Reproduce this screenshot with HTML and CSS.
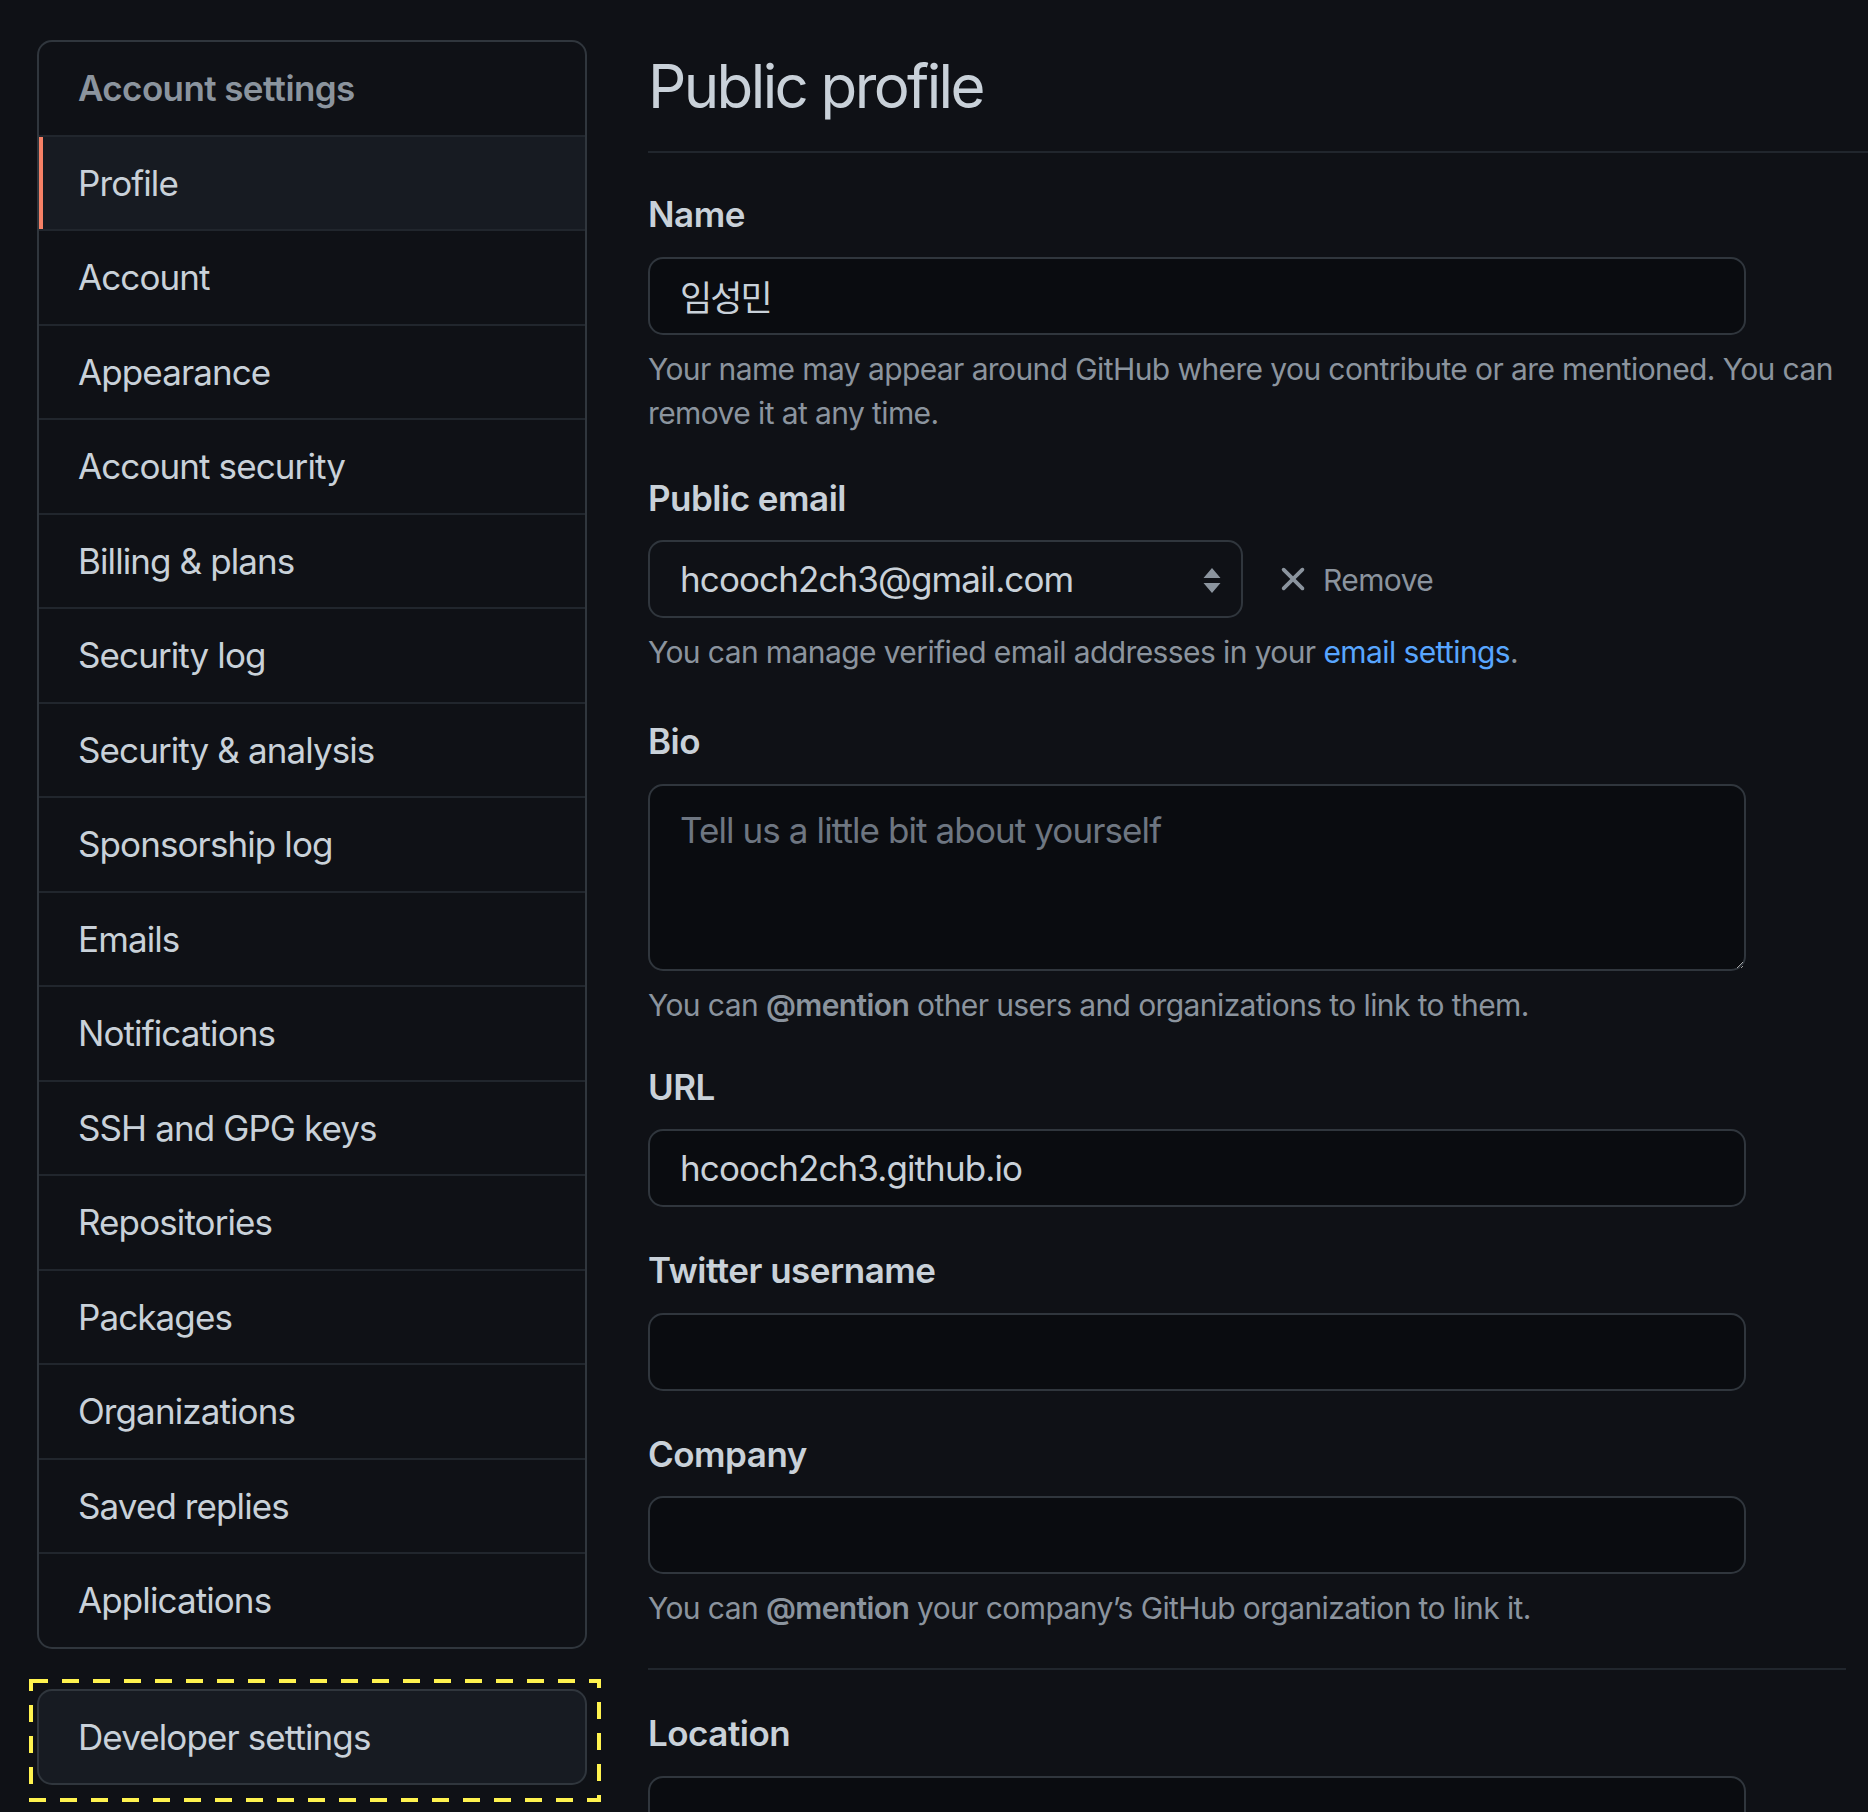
FILE: index.html
```html
<!DOCTYPE html>
<html lang="en">
<head>
<meta charset="utf-8">
<title>Public profile</title>
<link rel="stylesheet" href="styles.css">
</head>
<body>
<div class="layout">
  <aside class="sidebar">
    <nav class="menu">
      <h3 class="menu-heading">Account settings</h3>
      <a class="menu-item active">Profile</a>
      <a class="menu-item">Account</a>
      <a class="menu-item">Appearance</a>
      <a class="menu-item">Account security</a>
      <a class="menu-item">Billing &amp; plans</a>
      <a class="menu-item">Security log</a>
      <a class="menu-item">Security &amp; analysis</a>
      <a class="menu-item">Sponsorship log</a>
      <a class="menu-item">Emails</a>
      <a class="menu-item">Notifications</a>
      <a class="menu-item">SSH and GPG keys</a>
      <a class="menu-item">Repositories</a>
      <a class="menu-item">Packages</a>
      <a class="menu-item">Organizations</a>
      <a class="menu-item">Saved replies</a>
      <a class="menu-item">Applications</a>
    </nav>
    <div class="dev-wrap">
      <nav class="menu dev-menu">
        <a class="menu-item">Developer settings</a>
      </nav>
      <svg class="highlight" width="572" height="123" viewBox="0 0 572 123" aria-hidden="true">
        <rect x="2" y="2" width="568" height="119" fill="none" stroke="#fff34f" stroke-width="4" stroke-dasharray="17 14"/>
      </svg>
    </div>
  </aside>

  <main class="main">
    <div class="subhead">
      <h2 class="subhead-title">Public profile</h2>
    </div>
    <form class="form">
      <div class="form-group">
        <label class="label">Name</label>
        <input class="input input-ko" type="text" value="임성민">
        <p class="note">Your name may appear around GitHub where you contribute or are mentioned. You can remove it at any time.</p>
      </div>

      <div class="form-group">
        <label class="label">Public email</label>
        <div class="email-row">
          <div class="select-wrap">
            <select class="select">
              <option>hcooch2ch3@gmail.com</option>
            </select>
            <svg class="select-arrows" width="18" height="25" viewBox="0 0 18 25" aria-hidden="true">
              <path d="M9 0 L17.5 10 L0.5 10 Z M0.5 15 L17.5 15 L9 25 Z" fill="#8b949e"/>
            </svg>
          </div>
          <button class="btn-remove" type="button">
            <svg width="40" height="40" viewBox="0 0 16 16" aria-hidden="true"><path fill="#8b949e" d="M3.72 3.72a.75.75 0 0 1 1.06 0L8 6.94l3.22-3.22a.749.749 0 0 1 1.275.326.749.749 0 0 1-.215.734L9.06 8l3.22 3.22a.749.749 0 0 1-.326 1.275.749.749 0 0 1-.734-.215L8 9.06l-3.220 3.22a.751.751 0 0 1-1.042-.018.751.751 0 0 1-.018-1.042L6.94 8 3.72 4.78a.75.75 0 0 1 0-1.06Z"/></svg>
            <span>Remove</span>
          </button>
        </div>
        <p class="note">You can manage verified email addresses in your <a class="link">email settings</a>.</p>
      </div>

      <div class="form-group group-bio">
        <label class="label">Bio</label>
        <textarea class="input textarea" placeholder="Tell us a little bit about yourself"></textarea>
        <p class="note">You can <strong>@mention</strong> other users and organizations to link to them.</p>
      </div>

      <div class="form-group group-url">
        <label class="label">URL</label>
        <input class="input" type="text" value="hcooch2ch3.github.io">
      </div>

      <div class="form-group">
        <label class="label">Twitter username</label>
        <input class="input" type="text" value="">
      </div>

      <div class="form-group">
        <label class="label">Company</label>
        <input class="input" type="text" value="">
        <p class="note">You can <strong>@mention</strong> your company’s GitHub organization to link it.</p>
      </div>

      <hr class="divider">

      <div class="form-group group-location">
        <label class="label">Location</label>
        <input class="input" type="text" value="">
      </div>
    </form>
  </main>
</div>
</body>
</html>
```

FILE: styles.css
```css
html, body {
  margin: 0;
  padding: 0;
  background: #0f1116;
  color-scheme: dark;
}

body {
  font-family: Inter, "Noto Sans CJK KR", "Noto Sans", sans-serif;
  color: #c9d1d9;
  overflow: hidden;
  height: 1812px;
}

.layout {
  display: flex;
  gap: 61px;
  padding: 40px 0 0 37px;
}

/* Sidebar */
.sidebar {
  width: 550px;
  flex-shrink: 0;
}

.menu {
  display: flex;
  flex-direction: column;
  border: 2px solid #30363d;
  border-radius: 15px;
  overflow: hidden;
  background: #0f1116;
}

.menu-heading,
.menu-item {
  display: flex;
  align-items: center;
  height: 92.5px;
  padding-left: 39px;
  margin: 0;
  font-size: 35px;
  line-height: 52.5px;
  letter-spacing: -0.9px;
  border-top: 2px solid #21262d;
  box-sizing: content-box;
  color: #c9d1d9;
  text-decoration: none;
}

.menu-heading {
  border-top: 0;
  font-weight: 600;
  letter-spacing: -0.6px;
  color: #8b949e;
}

.menu-item.active {
  background: #171b22;
  box-shadow: inset 4px 0 0 #f78166;
}

.dev-wrap {
  position: relative;
  margin-top: 40px;
}

.dev-menu {
  background: #171b22;
}

.dev-menu .menu-item {
  border-top: 0;
}

.highlight {
  position: absolute;
  left: -8px;
  top: -10px;
  pointer-events: none;
}

/* Main */
.main {
  flex: 1;
  min-width: 0;
}

.subhead {
  padding-top: 1px;
  padding-bottom: 20px;
  border-bottom: 2px solid #21262d;
}

.subhead-title {
  margin: 0;
  font-size: 60px;
  line-height: 90px;
  font-weight: 400;
  letter-spacing: -2.6px;
  color: #c9d1d9;
}

.form {
  width: 1198px;
  padding-top: 1px;
}

.form-group {
  margin: 37px 0;
}

.form-group:first-child {
  margin-top: 34px;
}

.group-bio {
  margin-top: 41px;
  margin-bottom: 34px;
}

.group-url {
  margin-top: 34px;
}

.label {
  display: block;
  font-size: 35px;
  line-height: 52.5px;
  font-weight: 600;
  letter-spacing: -0.5px;
  color: #c9d1d9;
  margin-bottom: 16px;
}

.input {
  display: block;
  box-sizing: border-box;
  width: 1098px;
  height: 78px;
  padding: 0 30px;
  margin: 0;
  font-family: Inter, "Noto Sans CJK KR", sans-serif;
  font-size: 35px;
  letter-spacing: -0.9px;
  color: #c9d1d9;
  background: #0a0c10;
  border: 2px solid #30363d;
  border-radius: 15px;
  outline: none;
}

.input-ko {
  letter-spacing: -2px;
}

.textarea {
  height: 187px;
  padding-top: 18px;
  line-height: 52.5px;
  resize: vertical;
}

.textarea::placeholder {
  color: #6e7681;
}

.note {
  margin: 12px 0 0;
  font-size: 30px;
  line-height: 44px;
  letter-spacing: -0.6px;
  color: #8b949e;
}

.note strong {
  font-weight: 600;
}

.link {
  color: #58a6ff;
  text-decoration: none;
}

.email-row {
  display: flex;
  align-items: center;
}

.select-wrap {
  position: relative;
  width: 595px;
  height: 78px;
}

.select {
  appearance: none;
  -webkit-appearance: none;
  box-sizing: border-box;
  width: 100%;
  height: 100%;
  padding: 0 60px 0 30px;
  font-family: Inter, sans-serif;
  font-size: 35px;
  letter-spacing: -0.9px;
  color: #c9d1d9;
  background: #0f1116;
  border: 2px solid #30363d;
  border-radius: 15px;
  outline: none;
}

.select-arrows {
  position: absolute;
  right: 22px;
  top: 28px;
  pointer-events: none;
}

.btn-remove {
  display: flex;
  align-items: center;
  gap: 10px;
  margin-left: 30px;
  padding: 0;
  background: none;
  border: 0;
  font-family: Inter, sans-serif;
  font-size: 30px;
  letter-spacing: -0.6px;
  color: #8b949e;
}

.btn-remove span {
  position: relative;
  top: 1px;
}

.divider {
  width: 1198px;
  margin: 38px 0 37px;
  border: 0;
  border-top: 2px solid #21262d;
  height: 0;
}

.group-location {
  margin-top: 37px;
}
```
